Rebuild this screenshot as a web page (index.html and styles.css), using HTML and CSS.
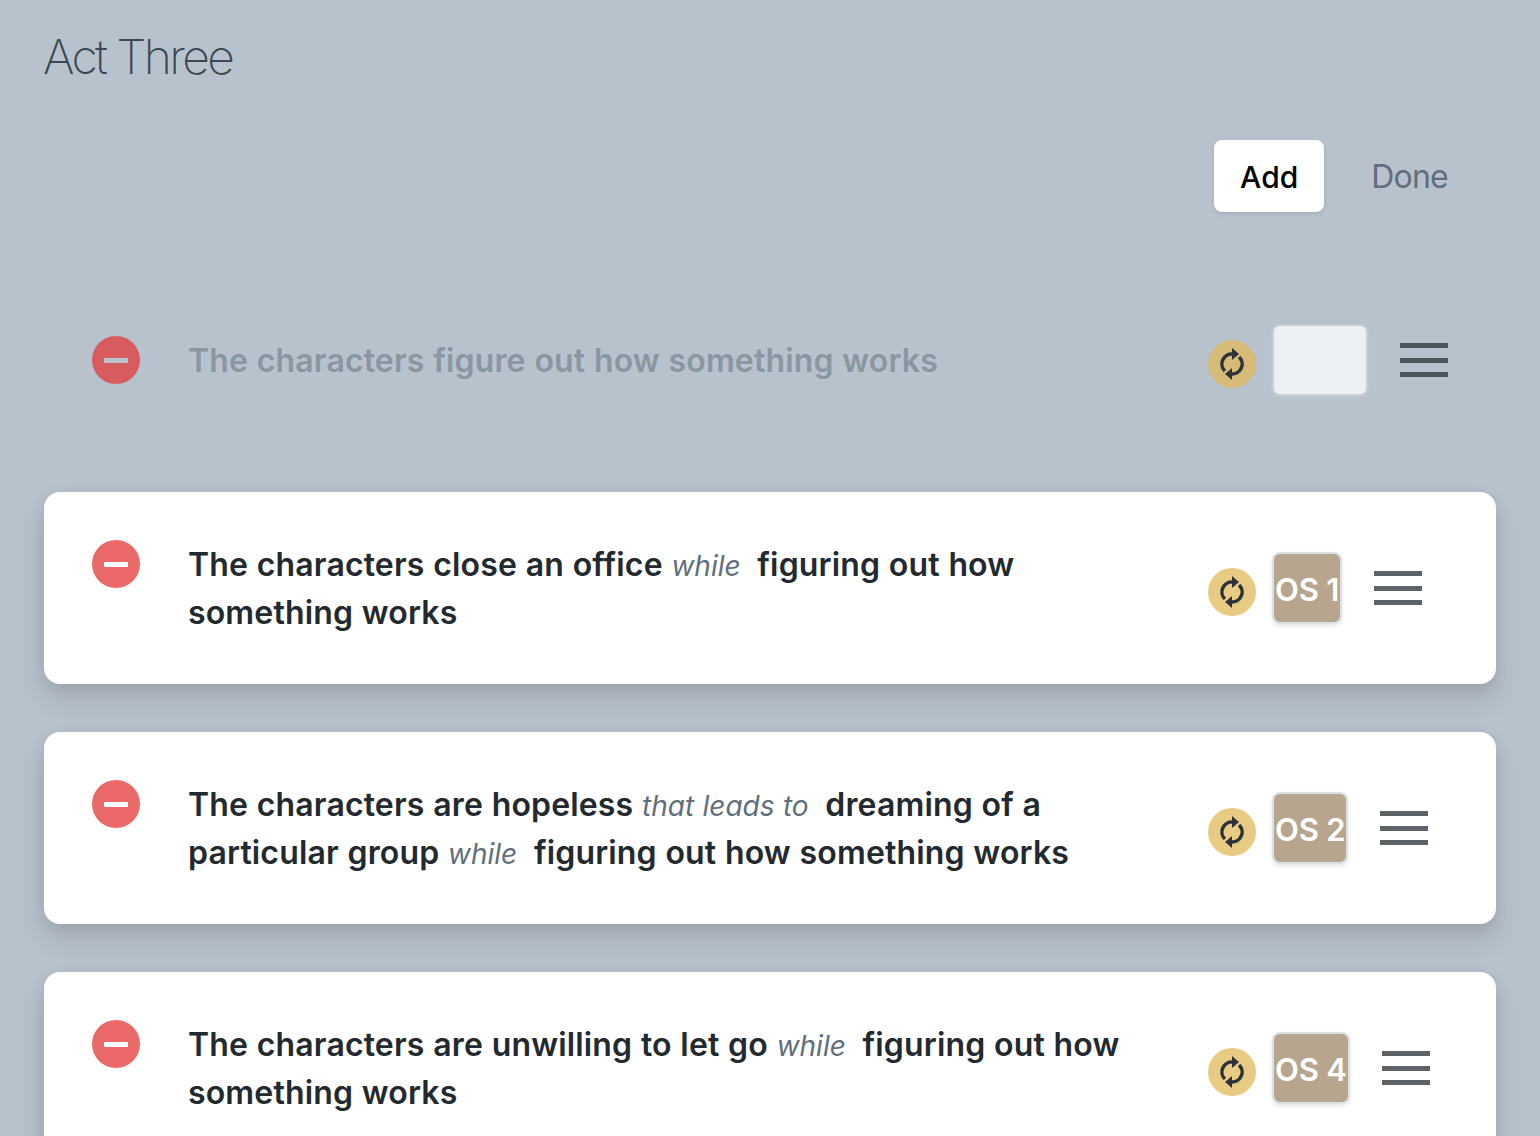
FILE: index.html
```html
<!DOCTYPE html>
<html>
<head>
    <title>Act Three</title>
    <link rel="stylesheet" href="styles.css">
</head>
<body>
    <h1 class="act-title">Act Three</h1>

    <div class="actions">
        <button class="add-btn">Add</button>
        <button class="done-btn">Done</button>
    </div>

    <div class="beat beat-ghost">
        <div class="beat-main">
            <div class="remove-btn"><span class="remove-bar"></span></div>
            <div class="beat-text">The characters figure out how something works</div>
        </div>
        <div class="sync-btn">
            <svg viewBox="0 0 48 48" width="48" height="48"><path d="M25 14A10 10 0 0 0 16.900 31.100M23 34A10 10 0 0 0 31.100 16.900" fill="none" stroke="currentColor" stroke-width="3.500"/><path d="M24 8l7 6-7 6zM24 40l-7-6 7-6z" fill="currentColor"/></svg>
        </div>
        <div class="os-chip os-chip-empty"></div>
        <div class="menu-icon"><span></span><span></span><span></span></div>
    </div>

    <div class="beat">
        <div class="beat-main">
            <div class="remove-btn"><span class="remove-bar"></span></div>
            <div class="beat-text">The characters close an office <em>while</em> figuring out how something works</div>
        </div>
        <div class="sync-btn">
            <svg viewBox="0 0 48 48" width="48" height="48"><path d="M25 14A10 10 0 0 0 16.900 31.100M23 34A10 10 0 0 0 31.100 16.900" fill="none" stroke="currentColor" stroke-width="3.500"/><path d="M24 8l7 6-7 6zM24 40l-7-6 7-6z" fill="currentColor"/></svg>
        </div>
        <div class="os-chip">OS 1</div>
        <div class="menu-icon"><span></span><span></span><span></span></div>
    </div>

    <div class="beat">
        <div class="beat-main">
            <div class="remove-btn"><span class="remove-bar"></span></div>
            <div class="beat-text">The characters are hopeless <em>that leads to</em> dreaming of a particular group <em>while</em> figuring out how something works</div>
        </div>
        <div class="sync-btn">
            <svg viewBox="0 0 48 48" width="48" height="48"><path d="M25 14A10 10 0 0 0 16.900 31.100M23 34A10 10 0 0 0 31.100 16.900" fill="none" stroke="currentColor" stroke-width="3.500"/><path d="M24 8l7 6-7 6zM24 40l-7-6 7-6z" fill="currentColor"/></svg>
        </div>
        <div class="os-chip">OS 2</div>
        <div class="menu-icon"><span></span><span></span><span></span></div>
    </div>

    <div class="beat">
        <div class="beat-main">
            <div class="remove-btn"><span class="remove-bar"></span></div>
            <div class="beat-text">The characters are unwilling to let go <em>while</em> figuring out how something works</div>
        </div>
        <div class="sync-btn">
            <svg viewBox="0 0 48 48" width="48" height="48"><path d="M25 14A10 10 0 0 0 16.900 31.100M23 34A10 10 0 0 0 31.100 16.900" fill="none" stroke="currentColor" stroke-width="3.500"/><path d="M24 8l7 6-7 6zM24 40l-7-6 7-6z" fill="currentColor"/></svg>
        </div>
        <div class="os-chip">OS 4</div>
        <div class="menu-icon"><span></span><span></span><span></span></div>
    </div>
</body>
</html>
```

FILE: styles.css
```css
html { overflow: hidden; }
body { margin: 0; padding: 0 44px; background-color: #b8c2cc; color: #22292f; font-family: Inter, "Liberation Sans", sans-serif; font-size: 32px; line-height: 48px; height: 1136px; overflow: hidden; }
.act-title { margin: 0 0 0 -1px; padding-top: 27px; font-size: 48px; font-weight: 200; line-height: 60px; color: #3d4852; letter-spacing: -2.6px; }
.actions { display: flex; justify-content: flex-end; align-items: center; margin-top: 53px; margin-bottom: 64px; padding-right: 48px; }
.add-btn { height: 72px; width: 110px; padding: 1px 0 0; border: none; border-radius: 8px; background-color: #fff; color: #000; font: inherit; font-size: 30px; font-weight: 500; box-shadow: 0 2px 4px rgba(0, 0, 0, 0.1); }
.done-btn { margin-left: 47px; padding: 2px 0 0; border: none; background: none; color: #606f7b; font: inherit; letter-spacing: -0.75px; }
.beat { display: flex; align-items: center; margin-bottom: 48px; padding: 48px; border-radius: 16px; background-color: #fff; box-shadow: 0 15px 30px rgba(0, 0, 0, 0.11), 0 5px 15px rgba(0, 0, 0, 0.08); }
.beat-ghost { background: none; box-shadow: none; }
.beat-main { display: flex; align-items: flex-start; flex: none; width: 1116px; }
.beat-text { flex: none; width: 960px; margin-left: 48px; margin-bottom: -1px; padding-top: 1px; font-weight: 600; letter-spacing: 0.15px; word-spacing: 0.5px; }
.beat-text em { margin-right: 8px; font-size: 28px; font-weight: 400; line-height: 1; letter-spacing: 0; color: #606f7b; }
.beat-ghost .beat-text { color: #8a96a1; }
.remove-btn { display: flex; flex: none; align-items: center; justify-content: center; width: 48px; height: 48px; border-radius: 50%; background-color: #ea6868; }
.beat-ghost .remove-btn { background-color: #d85b5e; }
.remove-bar { display: block; width: 24px; height: 5px; background-color: #fff; }
.beat-ghost .remove-bar { background-color: #b8c2cc; }
.sync-btn { flex: none; width: 48px; height: 48px; margin-top: 8px; border-radius: 50%; background-color: #e8cc83; color: #2f3338; }
.beat-ghost .sync-btn { background-color: #d6bc78; }
.sync-btn svg { display: block; }
.os-chip { display: flex; flex: none; align-items: center; justify-content: center; box-sizing: border-box; height: 72px; margin-left: 16px; padding: 4px 1px 0; border: 2px solid #dae1e7; border-radius: 8px; background-color: #b8a58d; color: #fff; font-size: 31px; font-weight: 600; letter-spacing: -0.2px; white-space: nowrap; box-shadow: 0 2px 4px rgba(0, 0, 0, 0.1); }
.os-chip-empty { width: 96px; border-color: #c8d0d7; background-color: #edf0f3; box-shadow: 0 1px 3px rgba(255, 255, 255, 0.2); }
.menu-icon { display: flex; flex: none; flex-direction: column; justify-content: space-between; width: 48px; height: 34px; margin-left: 32px; }
.menu-icon span { display: block; height: 5px; background-color: #5e6368; }
.beat-ghost .menu-icon span { background-color: #4b535b; }
```
